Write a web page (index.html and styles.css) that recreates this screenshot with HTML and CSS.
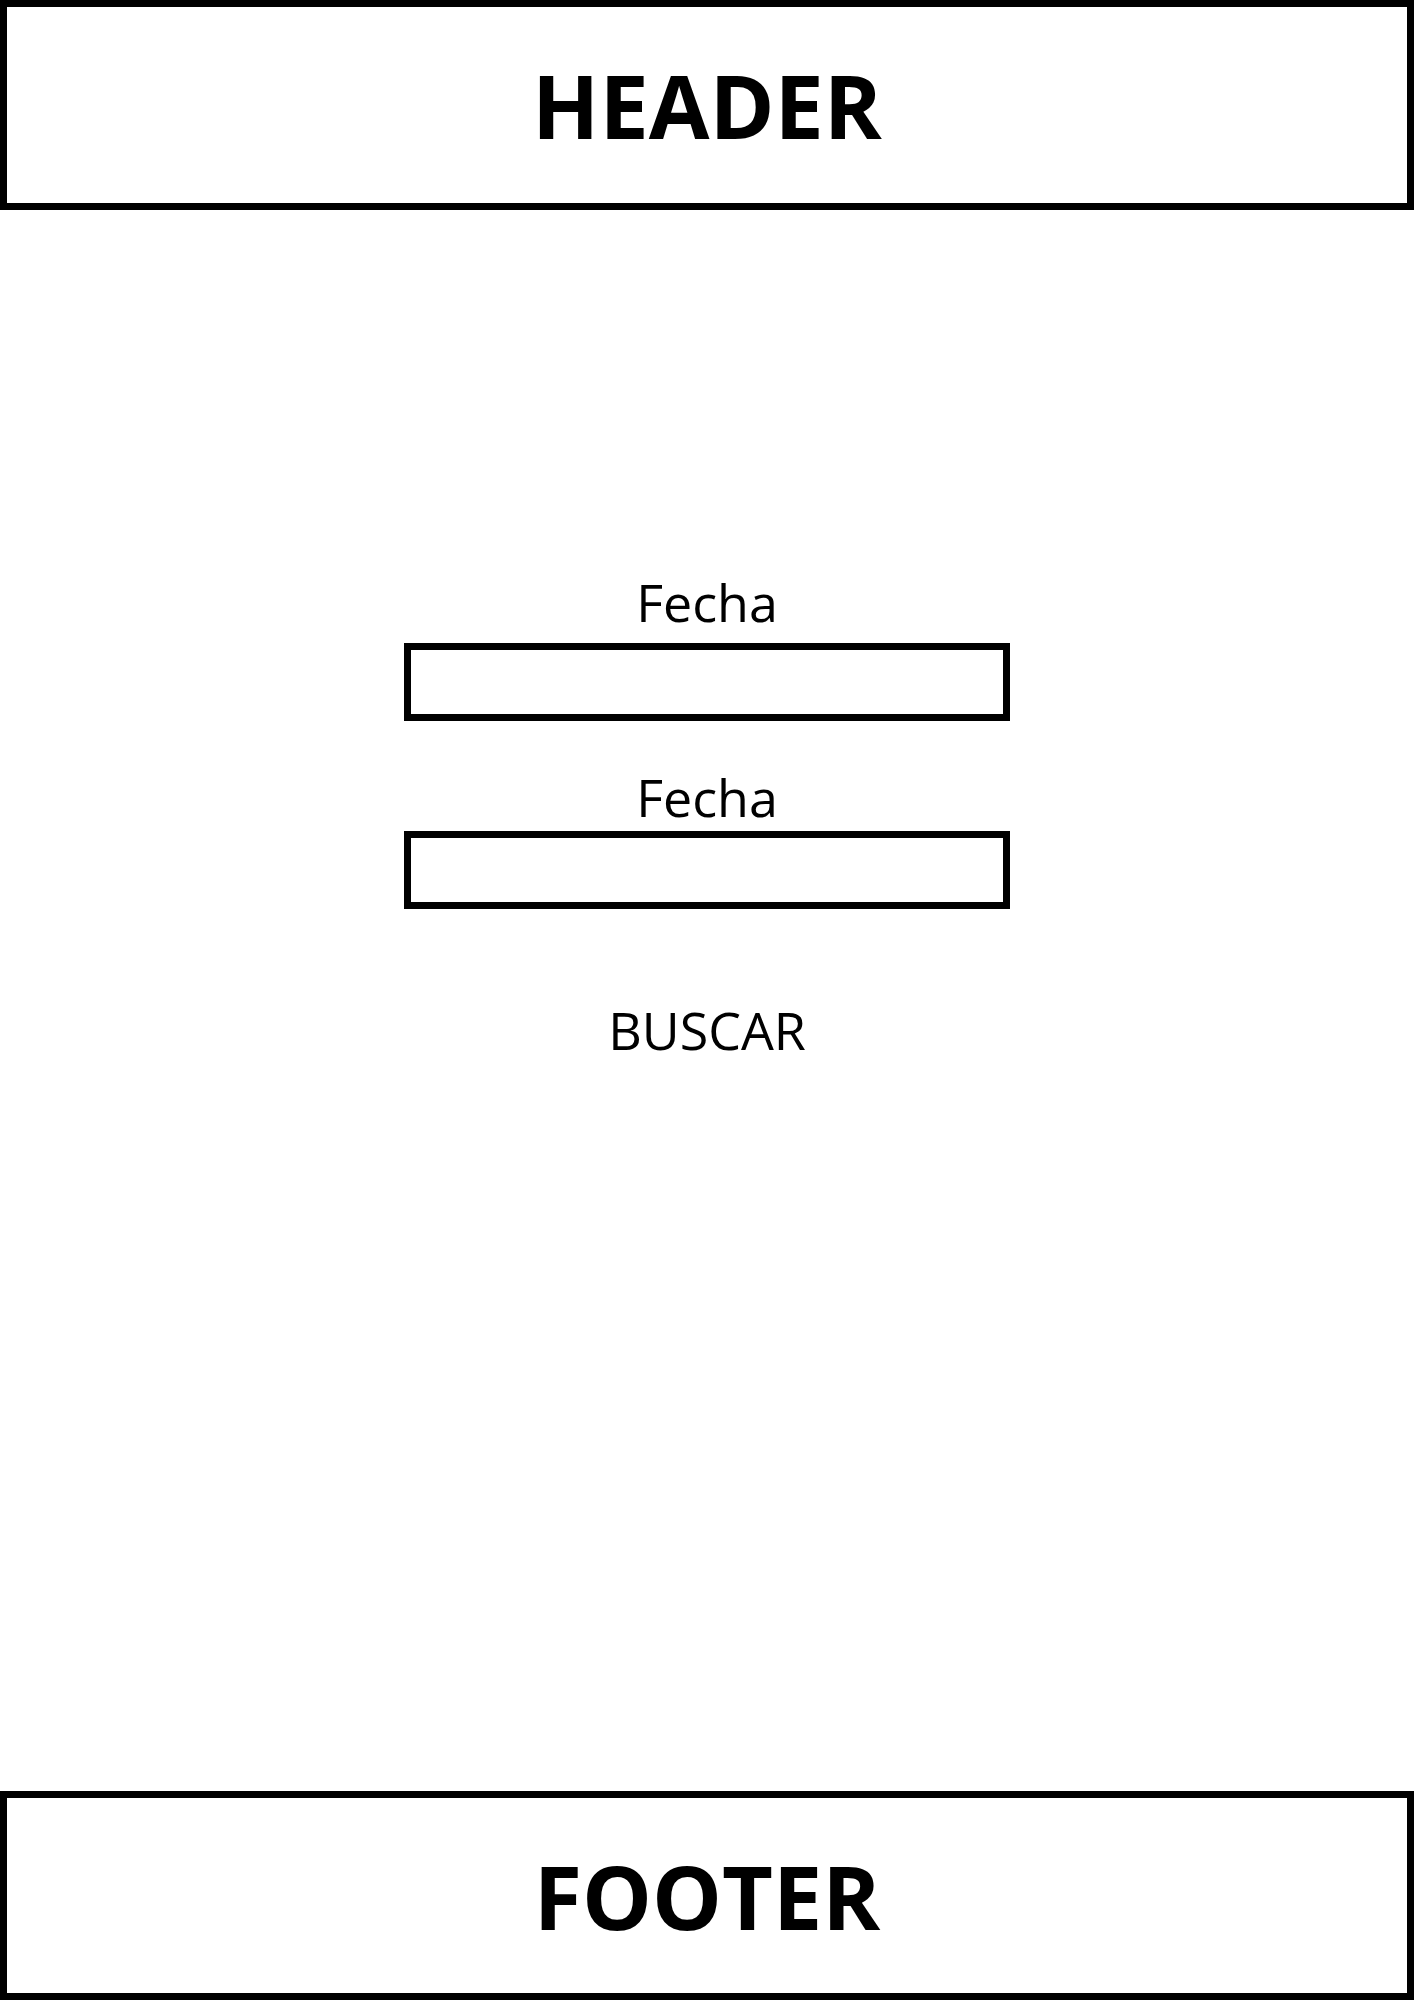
FILE: index.html
```html
<!DOCTYPE html>
<html lang="es">
<head>
<meta charset="utf-8">
<title>Buscar</title>
<link rel="stylesheet" href="styles.css">
</head>
<body>
<header class="site-header"><span class="box-title">HEADER</span></header>
<main class="search">
  <div class="field field-first">
    <label class="field-label" for="f1">Fecha</label>
    <input class="field-input" id="f1" type="text">
  </div>
  <div class="field field-second">
    <label class="field-label" for="f2">Fecha</label>
    <input class="field-input" id="f2" type="text">
  </div>
  <button class="search-btn" type="button">BUSCAR</button>
</main>
<footer class="site-footer"><span class="box-title">FOOTER</span></footer>
</body>
</html>
```

FILE: styles.css
```css
html, body {
  margin: 0;
  padding: 0;
  background: #fff;
}
body {
  min-height: 2000px;
  display: flex;
  flex-direction: column;
  font-family: "Open Sans", "DejaVu Sans", sans-serif;
  color: #000;
}
.site-header,
.site-footer {
  box-sizing: border-box;
  border: 7px solid #000;
  display: flex;
  align-items: center;
  justify-content: center;
}
.site-header {
  height: 210px;
}
.site-footer {
  height: 209px;
}
.box-title {
  font-size: 88px;
  font-weight: 700;
  line-height: 1;
}
.search {
  flex: 1;
  display: flex;
  flex-direction: column;
  align-items: center;
  padding-top: 366px;
}
.field {
  display: flex;
  flex-direction: column;
  align-items: center;
  gap: 15px;
}
.field-second {
  margin-top: 50px;
  gap: 8px;
}
.field-label {
  font-size: 52px;
  line-height: 1;
}
.field-input {
  box-sizing: border-box;
  width: 606px;
  height: 78px;
  border: 7px solid #000;
  background: #fff;
  margin: 0;
  padding: 0 12px;
  outline: none;
  font-family: inherit;
}
.search-btn {
  margin-top: 95px;
  border: none;
  background: none;
  padding: 0;
  font-family: inherit;
  font-size: 52px;
  line-height: 1;
  color: #000;
  cursor: pointer;
}
```
